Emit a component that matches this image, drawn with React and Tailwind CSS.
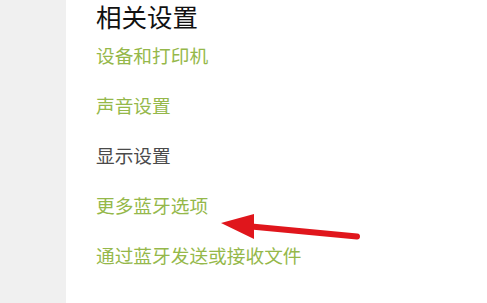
import React from "react";

const links = [
  { label: "设备和打印机", active: true },
  { label: "声音设置", active: true },
  { label: "显示设置", active: false },
  { label: "更多蓝牙选项", active: true },
  { label: "通过蓝牙发送或接收文件", active: true },
];

export default function App() {
  return (
    <div
      className="relative flex w-[487px] h-[303px] overflow-hidden bg-white"
      style={{ fontFamily: '"Noto Sans CJK SC", "Noto Sans", sans-serif' }}
    >
      {/* Side panel */}
      <div className="w-[66px] h-full bg-[#f0f0f0]" />

      {/* Related settings */}
      <div className="flex flex-col pl-[30px] pt-[2px]">
        <h2 className="text-[25.5px] leading-[28px] text-[#111] font-normal">相关设置</h2>
        {links.map((l) => (
          <div
            key={l.label}
            className={
              "h-[50px] leading-[50px] text-[18.7px] " +
              (l.active ? "text-[#95b84a]" : "text-[#4a4a4a]")
            }
          >
            {l.label}
          </div>
        ))}
      </div>

      {/* Annotation arrow */}
      <svg
        className="absolute left-0 top-0 pointer-events-none"
        width="487"
        height="303"
        viewBox="0 0 487 303"
      >
        <line x1="357" y1="236.5" x2="246" y2="226" stroke="#e0161c" strokeWidth="6" strokeLinecap="round" />
        <polygon points="221,223 254,214 254,239" fill="#e0161c" strokeLinejoin="round" />
      </svg>
    </div>
  );
}
